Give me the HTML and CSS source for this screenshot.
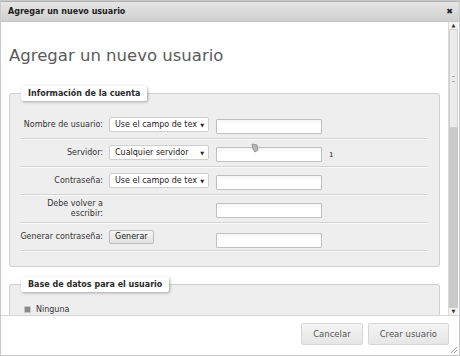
FILE: index.html
```html
<!DOCTYPE html>
<html lang="es">
<head>
    <meta charset="UTF-8">
    <title>Agregar un nuevo usuario</title>
    <link rel="stylesheet" href="styles.css">
</head>
<body>
    <div class="dialog">
        <div class="titlebar">
            <span class="title">Agregar un nuevo usuario</span>
            <span class="close">✖</span>
        </div>

        <div class="content">
            <div class="body">
                <h2 class="page-title">Agregar un nuevo usuario</h2>

                <fieldset class="group">
                    <legend>Información de la cuenta</legend>

                    <div class="row">
                        <label>Nombre de usuario:</label>
                        <span class="select">Use el campo de tex<i>▼</i></span>
                        <input type="text" class="field">
                    </div>
                    <div class="row">
                        <label>Servidor:</label>
                        <span class="select">Cualquier servidor<i>▼</i></span>
                        <span class="field-wrap">
                            <input type="text" class="field">
                            <svg class="pointer" width="8" height="10" viewBox="0 0 8 10">
                                <path d="M1 1 L6 2 L7 7 L4 9 L2 6 Z" fill="#b8b8b8" stroke="#8a8a8a" stroke-width="0.8"/>
                            </svg>
                        </span>
                        <span class="note">1</span>
                    </div>
                    <div class="row">
                        <label>Contraseña:</label>
                        <span class="select">Use el campo de tex<i>▼</i></span>
                        <input type="text" class="field">
                    </div>
                    <div class="row">
                        <label>Debe volver a<br>escribir:</label>
                        <span></span>
                        <input type="text" class="field">
                    </div>
                    <div class="row">
                        <label>Generar contraseña:</label>
                        <span><button class="small-btn">Generar</button></span>
                        <input type="text" class="field low">
                    </div>
                </fieldset>

                <fieldset class="group">
                    <legend>Base de datos para el usuario</legend>
                    <div class="radio-row"><span class="radio"></span>Ninguna</div>
                </fieldset>
            </div>

            <div class="scrollbar">
                <div class="arrow">▲</div>
                <div class="thumb"><span class="grip-lines"></span></div>
                <div class="track"></div>
                <div class="arrow">▼</div>
            </div>
        </div>

        <div class="buttonpane">
            <button class="btn">Cancelar</button>
            <button class="btn">Crear usuario</button>
            <span class="resize"></span>
        </div>
    </div>
</body>
</html>
```

FILE: styles.css
```css
body {
    margin: 0;
    padding: 0;
    background-color: #fff;
    font-family: "DejaVu Sans", Verdana, sans-serif;
    color: #222;
}
.dialog {
    width: 460px;
    height: 356px;
    box-sizing: border-box;
    border: 1px solid #c8c8c8;
    display: flex;
    flex-direction: column;
    position: relative;
    overflow: hidden;
}
.titlebar {
    height: 21px;
    flex: none;
    box-sizing: border-box;
    display: flex;
    align-items: center;
    justify-content: space-between;
    padding: 0 6px 0 7px;
    background: linear-gradient(#e6e6e6, #cfcfcf);
    border-top: 1px solid #b0b0b0;
    border-bottom: 1px solid #c4c4c4;
}
.title {
    font-size: 8px;
    font-weight: bold;
    color: #1e1e1e;
}
.close {
    font-size: 8px;
    color: #222;
}
.content {
    flex: 1;
    display: flex;
    min-height: 0;
}
.body {
    flex: 1;
    overflow: hidden;
    padding: 0 8px 0 8px;
}
.page-title {
    margin: 24px 0 20px 0;
    font-size: 16.5px;
    line-height: 20px;
    font-weight: normal;
    color: #5a5a5a;
}
.group {
    margin: 0 0 10px 0;
    padding: 10px 11px 15px 10px;
    border: 1px solid #cfcfcf;
    border-radius: 3px;
    background-color: #eeeeee;
}
.group legend {
    margin-left: 1px;
    padding: 3px 7px;
    background-color: #fff;
    border-radius: 2px;
    box-shadow: 1px 1px 3px rgba(0,0,0,0.3);
    font-size: 8px;
    font-weight: bold;
    color: #2a2a2a;
}
.row {
    display: grid;
    grid-template-columns: 83px 100px 106px auto;
    column-gap: 6px;
    align-items: center;
    height: 27px;
    border-bottom: 1px solid #d4d4d4;
    box-shadow: 0 1px 0 #fafafa;
    font-size: 8px;
}
.row label {
    text-align: right;
    color: #333;
    line-height: 10px;
}
.select {
    display: flex;
    justify-content: space-between;
    align-items: center;
    height: 15px;
    box-sizing: border-box;
    padding: 0 4px 0 5px;
    background-color: #fff;
    border: 1px solid #cfcfcf;
    border-radius: 2px;
    white-space: nowrap;
    overflow: hidden;
    color: #222;
}
.select i {
    font-style: normal;
    font-size: 5px;
}
.field {
    width: 106px;
    height: 15px;
    box-sizing: border-box;
    margin: 4px 0 0 1px;
    border: 1px solid #c0c0c0;
    border-radius: 1px;
    background: linear-gradient(#f6f6f6, #fff 40%);
}
.field.low {
    margin-top: 7px;
}
.field-wrap {
    position: relative;
    display: block;
    height: 19px;
}
.pointer {
    position: absolute;
    left: 36px;
    top: 0;
}
.note {
    font-size: 7px;
    padding-left: 2px;
    padding-top: 4px;
}
.small-btn {
    font-family: "DejaVu Sans", Verdana, sans-serif;
    font-size: 8px;
    height: 14px;
    padding: 0 5px;
    border: 1px solid #bdbdbd;
    border-radius: 2px;
    background: linear-gradient(#f6f6f6, #e2e2e2);
    color: #222;
}
.radio-row {
    display: flex;
    align-items: center;
    padding: 3px 0 0 4px;
    font-size: 8px;
    color: #333;
}
.radio {
    width: 5px;
    height: 5px;
    border-radius: 1px;
    background-color: #8a8a8a;
    border: 1px solid #c4c4c4;
    margin-right: 5px;
}
.scrollbar {
    width: 9px;
    flex: none;
    display: flex;
    flex-direction: column;
    margin-right: 1px;
    border-left: 1px solid #d8d8d8;
    background-color: #c9c9c9;
}
.arrow {
    height: 7px;
    font-size: 5px;
    line-height: 7px;
    text-align: center;
    background-color: #f4f4f4;
    color: #333;
}
.thumb {
    height: 99px;
    box-sizing: border-box;
    background-color: #ececec;
    border: 1px solid #cfcfcf;
    display: flex;
    align-items: center;
    justify-content: center;
}
.grip-lines {
    width: 3px;
    height: 4px;
    border-top: 1px solid #aaa;
    border-bottom: 1px solid #aaa;
}
.track {
    flex: 1;
}
.buttonpane {
    flex: none;
    height: 40px;
    box-sizing: border-box;
    border-top: 1px solid #d6d6d6;
    display: flex;
    justify-content: flex-end;
    align-items: flex-start;
    gap: 5px;
    padding: 7px 10px 0 0;
}
.btn {
    font-family: "DejaVu Sans", Verdana, sans-serif;
    font-size: 8.5px;
    color: #555;
    height: 22px;
    padding: 0 11px;
    border: 1px solid #d6d6d6;
    border-radius: 2px;
    background: linear-gradient(#f4f4f4, #e6e6e6);
}
.resize {
    position: absolute;
    right: 2px;
    bottom: 2px;
    width: 6px;
    height: 6px;
    background: linear-gradient(135deg, transparent 45%, #999 45%, #999 55%, transparent 55%, transparent 70%, #999 70%, #999 80%, transparent 80%);
}
```
